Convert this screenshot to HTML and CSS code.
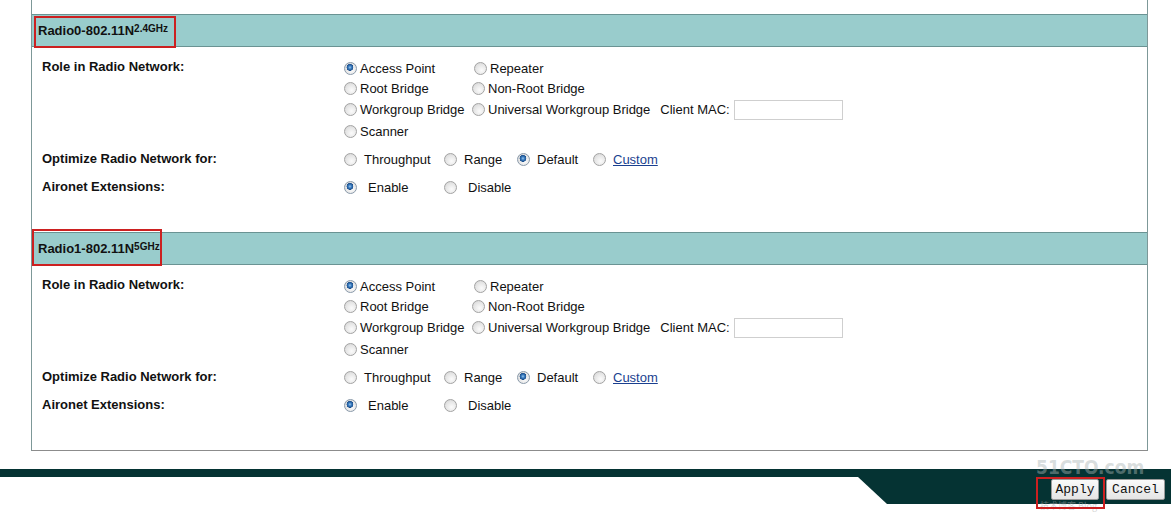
FILE: index.html
```html
<!DOCTYPE html>
<html>
<head>
<meta charset="utf-8">
<link rel="stylesheet" href="styles.css">
</head>
<body>
<div class="panel">
  <div class="section">
    <div class="sec-head">
      <span class="title">Radio0-802.11N<sup>2.4GHz</sup></span>
      <span class="mark mark-1"></span>
    </div>
    <div class="sec-body">
      <div class="row role">
        <div class="label">Role in Radio Network:</div>
        <div class="roles">
          <div class="rline"><label class="c1"><input type="radio" name="r0" checked>Access Point</label><label class="c2 rep"><input type="radio" name="r0">Repeater</label></div>
          <div class="rline"><label class="c1"><input type="radio" name="r0">Root Bridge</label><label class="c2"><input type="radio" name="r0">Non-Root Bridge</label></div>
          <div class="rline wg"><label class="c1"><input type="radio" name="r0">Workgroup Bridge</label><label class="c2"><input type="radio" name="r0">Universal Workgroup Bridge</label><span class="mac">Client MAC:</span><input class="mac-in" type="text"></div>
          <div class="rline"><label class="c1"><input type="radio" name="r0">Scanner</label></div>
        </div>
      </div>
      <div class="row">
        <div class="label">Optimize Radio Network for:</div>
        <div class="opts">
          <label class="o"><input type="radio" name="o0">Throughput</label>
          <label class="o"><input type="radio" name="o0">Range</label>
          <label class="o"><input type="radio" name="o0" checked>Default</label>
          <label class="o"><input type="radio" name="o0"><a href="#">Custom</a></label>
        </div>
      </div>
      <div class="row">
        <div class="label">Aironet Extensions:</div>
        <div class="opts">
          <label class="e"><input type="radio" name="a0" checked>Enable</label>
          <label class="e"><input type="radio" name="a0">Disable</label>
        </div>
      </div>
    </div>
  </div>
  <div class="section">
    <div class="sec-head">
      <span class="title">Radio1-802.11N<sup>5GHz</sup></span>
      <span class="mark mark-2"></span>
    </div>
    <div class="sec-body">
      <div class="row role">
        <div class="label">Role in Radio Network:</div>
        <div class="roles">
          <div class="rline"><label class="c1"><input type="radio" name="r1" checked>Access Point</label><label class="c2 rep"><input type="radio" name="r1">Repeater</label></div>
          <div class="rline"><label class="c1"><input type="radio" name="r1">Root Bridge</label><label class="c2"><input type="radio" name="r1">Non-Root Bridge</label></div>
          <div class="rline wg"><label class="c1"><input type="radio" name="r1">Workgroup Bridge</label><label class="c2"><input type="radio" name="r1">Universal Workgroup Bridge</label><span class="mac">Client MAC:</span><input class="mac-in" type="text"></div>
          <div class="rline"><label class="c1"><input type="radio" name="r1">Scanner</label></div>
        </div>
      </div>
      <div class="row">
        <div class="label">Optimize Radio Network for:</div>
        <div class="opts">
          <label class="o"><input type="radio" name="o1">Throughput</label>
          <label class="o"><input type="radio" name="o1">Range</label>
          <label class="o"><input type="radio" name="o1" checked>Default</label>
          <label class="o"><input type="radio" name="o1"><a href="#">Custom</a></label>
        </div>
      </div>
      <div class="row">
        <div class="label">Aironet Extensions:</div>
        <div class="opts">
          <label class="e"><input type="radio" name="a1" checked>Enable</label>
          <label class="e"><input type="radio" name="a1">Disable</label>
        </div>
      </div>
    </div>
  </div>
</div>
<div class="footer">
  <div class="tab">
    <button class="btn apply">Apply</button>
    <button class="btn cancel">Cancel</button>
  </div>
  <div class="wm">51CTO.com</div>
  <div class="wm-sub">技术博客 Blog</div>
  <span class="mark mark-3"></span>
</div>
</body>
</html>
```
FILE: styles.css
```css
html, body {
  margin: 0;
  padding: 0;
  background: #fff;
}
body {
  font-family: "Liberation Sans", Arial, sans-serif;
  font-size: 13px;
  color: #111;
  width: 1171px;
  height: 526px;
  overflow: hidden;
}
.panel {
  margin-left: 31px;
  width: 1115px;
  padding-top: 14px;
  border-left: 1px solid #7d9898;
  border-right: 1px solid #7d9898;
  border-bottom: 1px solid #8c8c8c;
}
.sec-head {
  position: relative;
  height: 31px;
  background: #99cccc;
  border-top: 1px solid #6a9393;
  border-bottom: 1px solid #6a9393;
  display: flex;
  align-items: center;
}
.title {
  padding-left: 6px;
  padding-top: 1px;
  font-weight: bold;
  font-size: 13px;
  line-height: 16px;
  color: #111;
}
.title sup {
  font-size: 10px;
  line-height: 0;
  position: relative;
  top: 2px;
}
.mark {
  position: absolute;
  border: 2px solid #cc2020;
  box-sizing: border-box;
  pointer-events: none;
}
.mark-1 { left: 2px; top: 1px; width: 142px; height: 32px; }
.mark-2 { left: 0; top: -4px; width: 130px; height: 37px; }
.sec-body {
  height: 185px;
  box-sizing: border-box;
  padding: 11px 0 0 10px;
}
.row {
  display: grid;
  grid-template-columns: 302px 1fr;
  margin-bottom: 8px;
}
.label {
  font-weight: bold;
  line-height: 19px;
}
.role .label {
  line-height: 17px;
}
.roles .rline {
  display: flex;
  align-items: center;
  height: 20px;
  white-space: nowrap;
}
.roles .rline.wg { height: 23px; }
label {
  display: inline-flex;
  align-items: center;
  white-space: nowrap;
}
.c1 { width: 128px; }
.rep { margin-left: 2px; }
input[type="radio"] {
  -webkit-appearance: none;
  appearance: none;
  box-sizing: border-box;
  width: 13px;
  height: 13px;
  margin: 0 3px 0 0;
  border-radius: 50%;
  border: 1px solid #a3a3a3;
  background: radial-gradient(circle at 60% 65%, #fbfbfb 0, #e6e6e6 55%, #cfcfcf 100%);
  flex: none;
}
input[type="radio"]:checked {
  background:
    radial-gradient(circle at 45% 40%, #9cc8ee 0, #3b7dc0 1.6px, #1c4f8c 3.2px, transparent 3.6px),
    radial-gradient(circle at 60% 65%, #fbfbfb 0, #e6e6e6 55%, #cfcfcf 100%);
  border-color: #8a9aaa;
}
.mac {
  margin-left: 10px;
  margin-right: 4px;
}
.mac-in {
  box-sizing: border-box;
  width: 109px;
  height: 20px;
  border: 1px solid #cfcfcf;
  padding: 0;
  margin: 0;
  background: #fff;
}
.opts {
  display: flex;
  align-items: center;
  height: 20px;
}
.o input[type="radio"] { margin-right: 7px; }
.o { margin-right: 14px; }
.o:nth-child(1) { width: 86px; }
.o:nth-child(2) { width: 59px; }
.o:nth-child(3) { width: 62px; }
.e { width: 100px; }
.e input[type="radio"] { margin-right: 11px; }
a {
  color: #1a3f8f;
  text-decoration: underline;
}
.footer {
  position: relative;
  margin-top: 18px;
  height: 35px;
  display: flex;
  justify-content: flex-end;
  background: linear-gradient(#053333, #053333) top left / 100% 8px no-repeat;
}
.tab {
  width: 313px;
  height: 35px;
  background: #053333;
  clip-path: polygon(0 0, 100% 0, 100% 100%, 29px 100%, 0 8px);
  display: flex;
  justify-content: flex-end;
  align-items: flex-start;
  gap: 7px;
  padding: 10px 6px 0 0;
  box-sizing: border-box;
}
.btn {
  font-family: "Liberation Mono", "Courier New", monospace;
  font-size: 13px;
  height: 21px;
  padding: 0;
  color: #111;
  background: linear-gradient(#fafafa, #e4e4e4);
  border: 1px solid #9a9a9a;
  border-radius: 2px;
}
.apply { width: 48px; }
.cancel { width: 59px; }
.wm {
  position: absolute;
  left: 1036px;
  top: -12px;
  font-family: "DejaVu Sans Condensed", "DejaVu Sans", sans-serif;
  font-weight: bold;
  font-size: 19px;
  line-height: 21px;
  color: rgba(170, 180, 180, 0.45);
  pointer-events: none;
}
.wm-sub {
  position: absolute;
  left: 1040px;
  top: 32px;
  font-family: "Noto Sans CJK SC", sans-serif;
  font-size: 9px;
  line-height: 10px;
  color: rgba(170, 170, 170, 0.5);
  pointer-events: none;
}
.mark-3 { left: 1036px; top: 8px; width: 69px; height: 32px; }
```
